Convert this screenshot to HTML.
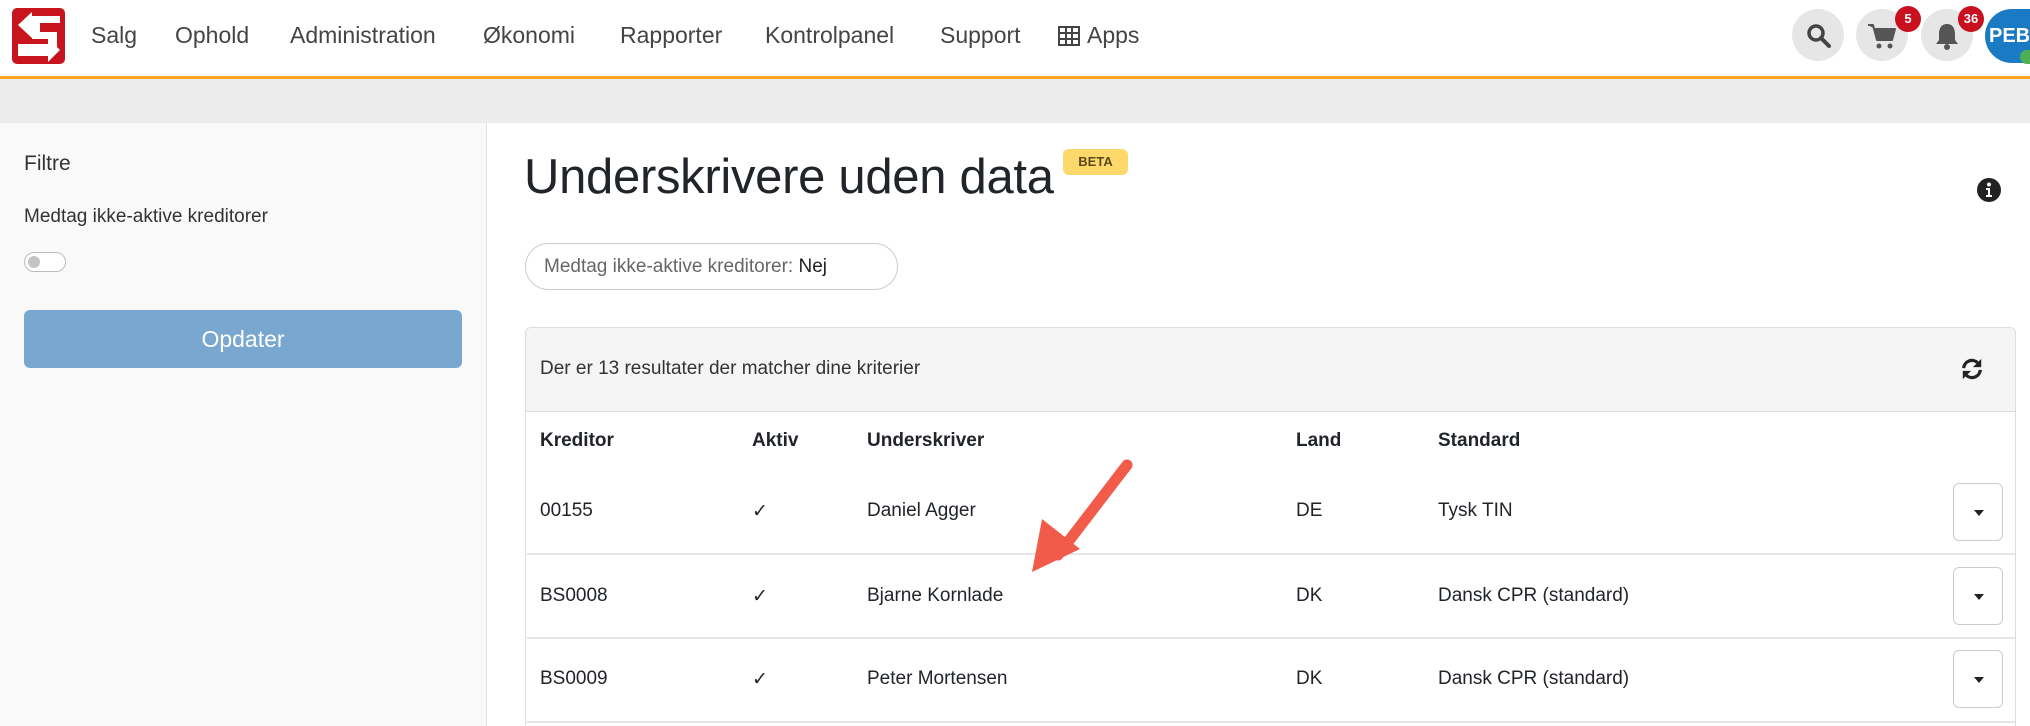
<!DOCTYPE html>
<html style="width:2030px;height:726px;overflow:hidden"><head><meta charset="utf-8"><style>
*{box-sizing:border-box;margin:0;padding:0}
body{width:2030px;height:726px;overflow:hidden;background:#fff;font-family:"Liberation Sans",sans-serif;color:#212529;position:relative}
.a{position:absolute;white-space:nowrap}
.nav{font-size:23px;color:#444;top:22px}
.circ{position:absolute;width:52px;height:52px;border-radius:50%;background:#e6e6e6;top:9px}
.badge{position:absolute;background:#c8101e;color:#fff;font-size:13px;font-weight:bold;border-radius:14px;height:26px;min-width:26px;text-align:center;line-height:26px;padding:0 4px}
.th{font-weight:bold;font-size:19px;top:430px}
.td{font-size:19px}
.dd{position:absolute;left:1953px;width:50px;height:58px;border:1px solid #ccc;border-radius:6px;background:#fff}
.dd:after{content:"";position:absolute;left:20px;top:26px;border-left:5px solid transparent;border-right:5px solid transparent;border-top:6px solid #222}
.sep{position:absolute;left:527px;width:1488px;height:2px;background:#e6e6e6}
</style></head><body>
<svg class="a" style="left:12px;top:8px" width="53" height="56" viewBox="0 0 53 56"><rect width="53" height="56" rx="5" fill="#c8151d"/><path d="M20 8H48V15H28V24H45V40H36V31H20V28L20 28Z" fill="#fff"/><path d="M20 4L6 17L20 30Z" fill="#fff"/><path d="M6 36H36V30L48 42L36 54V48H6Z" fill="#fff"/></svg>
<div class="a nav" style="left:91px">Salg</div>
<div class="a nav" style="left:175px">Ophold</div>
<div class="a nav" style="left:290px">Administration</div>
<div class="a nav" style="left:483px">Økonomi</div>
<div class="a nav" style="left:620px">Rapporter</div>
<div class="a nav" style="left:765px">Kontrolpanel</div>
<div class="a nav" style="left:940px">Support</div>
<svg class="a" style="left:1058px;top:26px" width="22" height="20" viewBox="0 0 22 20"><rect x="1" y="1" width="20" height="18" fill="none" stroke="#444" stroke-width="2"/><path d="M1 7H21M1 13H21M8 1V19M14 1V19" stroke="#444" stroke-width="2"/></svg>
<div class="a nav" style="left:1087px">Apps</div>
<div class="circ" style="left:1792px"></div>
<svg class="a" style="left:1806px;top:23px" width="26" height="26" viewBox="0 0 26 26"><circle cx="10" cy="10" r="7" fill="none" stroke="#444" stroke-width="3.5"/><path d="M15 15L23 23" stroke="#444" stroke-width="4" stroke-linecap="round"/></svg>
<div class="circ" style="left:1856px"></div>
<svg class="a" style="left:1867px;top:22px" width="30" height="28" viewBox="0 0 30 28"><path d="M1 3H6L10 18H25L28 7H8" fill="#555" stroke="#555" stroke-width="2" stroke-linejoin="round"/><circle cx="12" cy="24" r="2.5" fill="#555"/><circle cx="23" cy="24" r="2.5" fill="#555"/></svg>
<div class="badge" style="left:1895px;top:6px">5</div>
<div class="circ" style="left:1921px"></div>
<svg class="a" style="left:1934px;top:21px" width="26" height="30" viewBox="0 0 26 30"><path d="M13 3C7 3 5 8 5 13V19L2 23H24L21 19V13C21 8 19 3 13 3Z" fill="#555"/><circle cx="13" cy="26" r="3" fill="#555"/></svg>
<div class="badge" style="left:1958px;top:6px">36</div>
<div class="a" style="left:1985px;top:9px;width:45px;height:54px;border-radius:27px 0 0 27px;background:#1a7bc4;color:#fff;font-size:20px;font-weight:bold;line-height:54px;padding-left:4px;overflow:hidden">PEB</div>
<div class="a" style="left:2020px;top:50px;width:10px;height:14px;border-radius:7px 0 0 7px;background:#4caf50"></div>
<div class="a" style="left:0;top:76px;width:2030px;height:3px;background:#f6a623"></div>
<div class="a" style="left:0;top:79px;width:2030px;height:44px;background:#ececec"></div>
<div class="a" style="left:0;top:123px;width:487px;height:603px;background:#f9f9f9;border-right:1px solid #e3e3e3"></div>
<div class="a" style="left:24px;top:152px;font-size:21px;color:#333;font-weight:500">Filtre</div>
<div class="a" style="left:24px;top:206px;font-size:19px;color:#333">Medtag ikke-aktive kreditorer</div>
<div class="a" style="left:24px;top:252px;width:42px;height:20px;border:1px solid #bbb;border-radius:10px;background:#fff"></div>
<div class="a" style="left:28px;top:256px;width:12px;height:12px;border-radius:50%;background:#c4c4c4"></div>
<div class="a" style="left:24px;top:310px;width:438px;height:58px;border-radius:6px;background:#79a7cf;color:#fff;font-size:23px;text-align:center;line-height:58px">Opdater</div>
<div class="a" style="left:524px;top:149px;font-size:49px;color:#212529;letter-spacing:-0.3px">Underskrivere uden data</div>
<div class="a" style="left:1063px;top:149px;width:65px;height:26px;border-radius:6px;background:#fcd96a;color:#5a4a1a;font-size:13px;font-weight:bold;text-align:center;line-height:26px">BETA</div>
<svg class="a" style="left:1977px;top:178px" width="24" height="24" viewBox="0 0 24 24"><circle cx="12" cy="12" r="12" fill="#222"/><circle cx="12" cy="6.5" r="2" fill="#fff"/><path d="M9 10H13V17H15V19H9V17H11V12H9Z" fill="#fff"/></svg>
<div class="a" style="left:525px;top:243px;width:373px;height:47px;border:1px solid #ccc;border-radius:24px;font-size:19px;color:#666;line-height:45px;padding-left:18px">Medtag ikke-aktive kreditorer: <span style="color:#222">Nej</span></div>
<div class="a" style="left:525px;top:327px;width:1491px;height:399px;border:1px solid #ddd;border-bottom:none;border-radius:6px 6px 0 0"></div>
<div class="a" style="left:526px;top:328px;width:1489px;height:84px;background:#f5f5f5;border-bottom:1px solid #ddd;border-radius:6px 6px 0 0"></div>
<div class="a td" style="left:540px;top:358px;color:#333">Der er 13 resultater der matcher dine kriterier</div>
<svg class="a" style="left:1960px;top:357px" width="24" height="24" viewBox="0 0 26 26"><path d="M4 12A9 9 0 0 1 19 6" fill="none" stroke="#222" stroke-width="3.5"/><path d="M23 2V11H14Z" fill="#222"/><path d="M22 14A9 9 0 0 1 7 20" fill="none" stroke="#222" stroke-width="3.5"/><path d="M3 24V15H12Z" fill="#222"/></svg>
<div class="a th" style="left:540px">Kreditor</div>
<div class="a th" style="left:752px">Aktiv</div>
<div class="a th" style="left:867px">Underskriver</div>
<div class="a th" style="left:1296px">Land</div>
<div class="a th" style="left:1438px">Standard</div>
<div class="a td" style="left:540px;top:500px">00155</div>
<div class="a td" style="left:752px;top:500px">✓</div>
<div class="a td" style="left:867px;top:500px">Daniel Agger</div>
<div class="a td" style="left:1296px;top:500px">DE</div>
<div class="a td" style="left:1438px;top:500px">Tysk TIN</div>
<div class="dd" style="top:483px"></div>
<div class="sep" style="top:553px"></div>
<div class="a td" style="left:540px;top:585px">BS0008</div>
<div class="a td" style="left:752px;top:585px">✓</div>
<div class="a td" style="left:867px;top:585px">Bjarne Kornlade</div>
<div class="a td" style="left:1296px;top:585px">DK</div>
<div class="a td" style="left:1438px;top:585px">Dansk CPR (standard)</div>
<div class="dd" style="top:567px"></div>
<div class="sep" style="top:637px"></div>
<div class="a td" style="left:540px;top:668px">BS0009</div>
<div class="a td" style="left:752px;top:668px">✓</div>
<div class="a td" style="left:867px;top:668px">Peter Mortensen</div>
<div class="a td" style="left:1296px;top:668px">DK</div>
<div class="a td" style="left:1438px;top:668px">Dansk CPR (standard)</div>
<div class="dd" style="top:650px"></div>
<div class="sep" style="top:721px"></div>
<svg class="a" style="left:1020px;top:455px" width="125" height="125" viewBox="0 0 125 125"><path d="M107 10L38 100" stroke="#f25a4a" stroke-width="11" stroke-linecap="round"/><path d="M12 117L22 64L60 94Z" fill="#f25a4a"/></svg>
</body></html>
